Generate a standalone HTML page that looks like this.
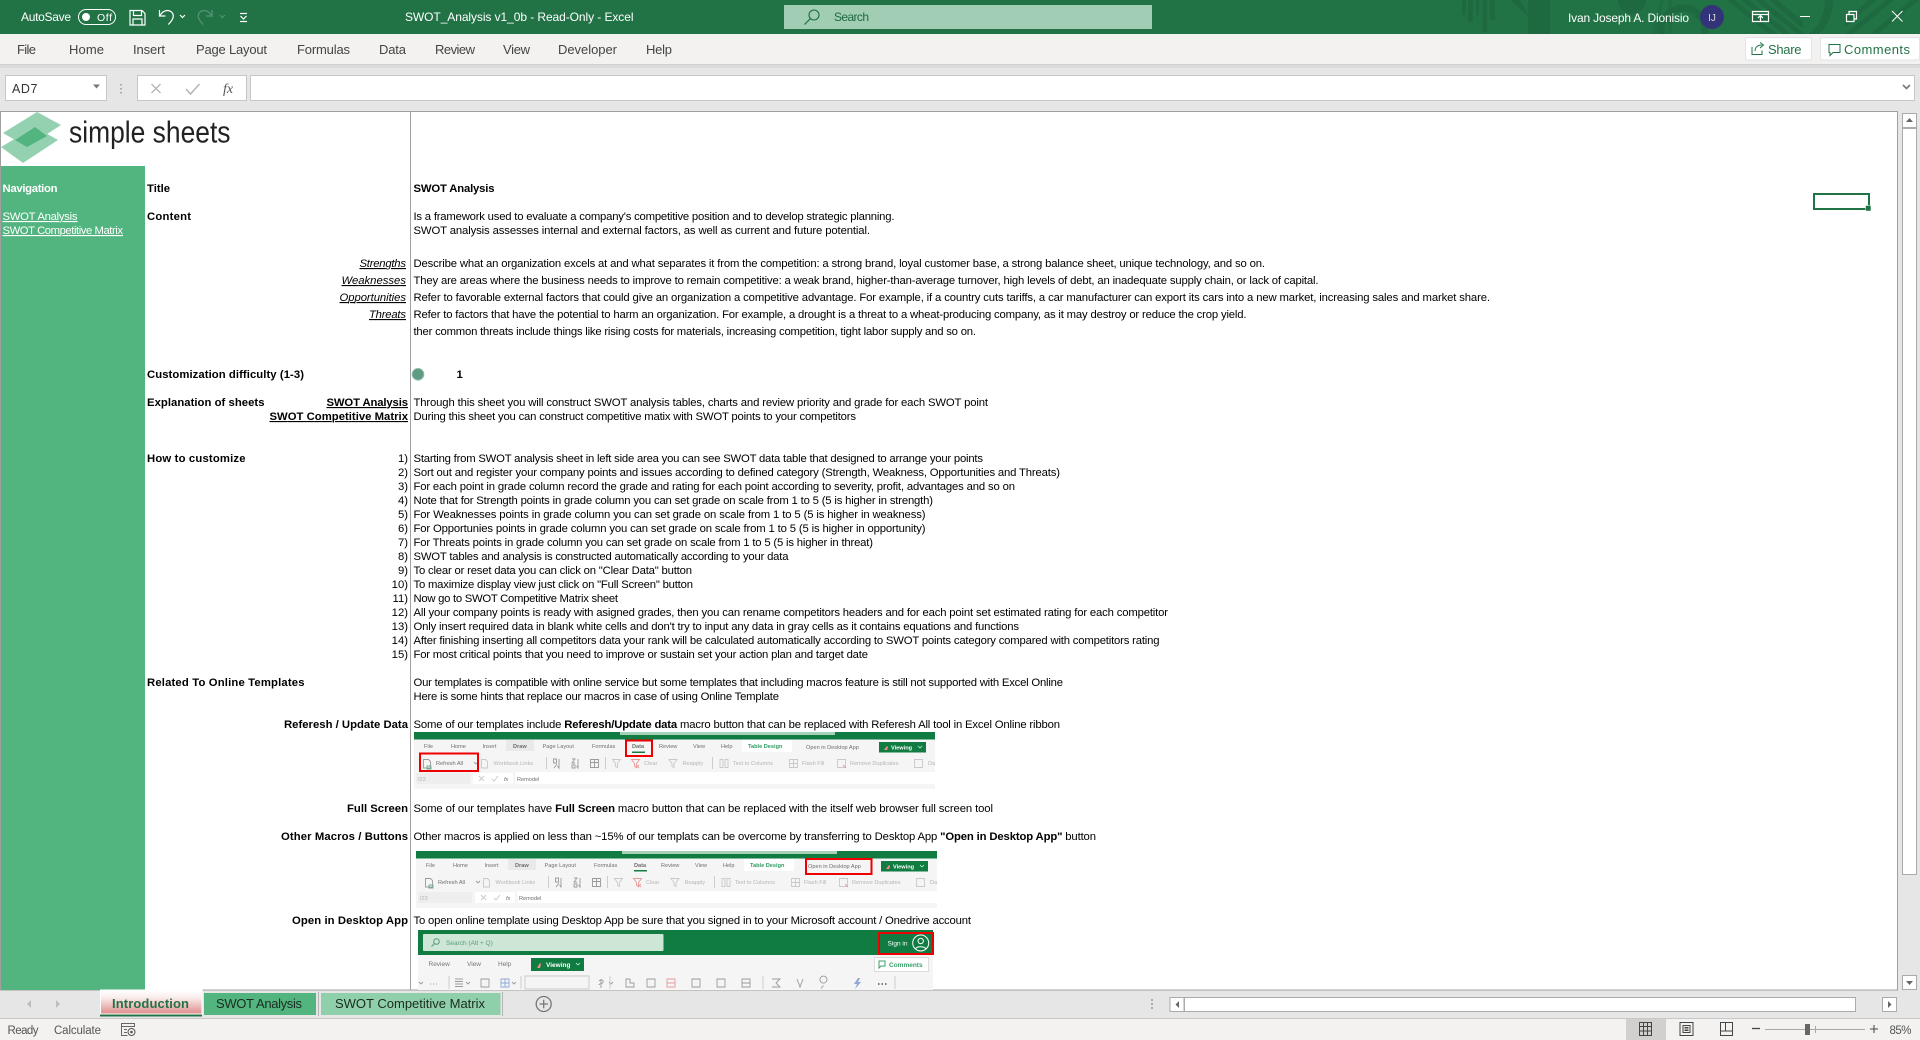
<!DOCTYPE html>
<html><head><meta charset="utf-8"><title>SWOT_Analysis v1_0b - Read-Only - Excel</title>
<style>
html,body{margin:0;padding:0;background:#e6e6e6;overflow:hidden}
svg{display:block;font-family:"Liberation Sans",Arial,sans-serif}
.c{font-size:11.3px;fill:#000}
.b{font-size:11.3px;font-weight:bold;fill:#000}
.i{font-size:11.3px;font-style:italic;fill:#000;text-decoration:underline}
.u{text-decoration:underline}
.r{text-anchor:end}
.tab{font-size:13px;fill:#444}
.w{font-size:12px;fill:#fff}
.s{font-size:11.5px;fill:#555}
.t{font-size:5.6px;fill:#6f6f6f}
.g{font-size:5.6px;fill:#b5b5b5}
.ic{fill:none;stroke:#fff;stroke-width:1.2}
.ti{fill:none;stroke:#9a9a9a;stroke-width:.9}
.tg{fill:none;stroke:#6fb08c;stroke-width:.9}
.tl{fill:none;stroke:#c9c9c9;stroke-width:.9}
.tr{fill:none;stroke:#e79a9a;stroke-width:.9}
.tb{fill:none;stroke:#8ea7d8;stroke-width:.9}
</style></head>
<body>
<svg width="1920" height="1040" viewBox="0 0 1920 1040" xmlns="http://www.w3.org/2000/svg">
<rect width="1920" height="1040" fill="#e6e6e6"/>
<!-- title bar -->
<rect width="1920" height="34" fill="#217346"/>
<g fill="#1e6940">
<rect x="1462" y="0" width="4" height="15"/><rect x="1468" y="0" width="5" height="22"/><rect x="1476" y="0" width="3" height="15"/><rect x="1483" y="0" width="4" height="32"/><rect x="1490" y="0" width="5" height="20"/>
<path d="M1510 0h10l8 14v-14h22v34h-22v-18z"/>
<circle cx="1632" cy="0" r="14"/>
<path d="M1652 34l8-34h4l-8 34zM1668 0h4v34h-4z" opacity=".6"/>
<circle cx="1683" cy="30" r="22" fill="none" stroke="#1e6940" stroke-width="7"/>
<path d="M1727 0h8l42 34h-8zM1741 0h8l42 34h-8zM1755 0h8l42 34h-8zM1769 0h8l26 21v8z"/>
<path d="M1825 0h8c0 14-5 26-14 34h-10c10-8 16-20 16-34z"/>
<path d="M1845 20l24-20h8l-32 27zM1845 34l41-34h8l-41 34zM1870 34l41-34h8l-41 34z"/>
</g>
<text class="w" x="21" y="21" textLength="50">AutoSave</text>
<rect x="78.500" y="9.500" width="37" height="15" rx="7.500" fill="none" stroke="#fff"/>
<circle cx="86" cy="17" r="4" fill="#fff"/>
<text x="97" y="21" font-size="10.500" fill="#fff" textLength="15">Off</text>
<path class="ic" d="M130 10.500h12l3 3v11.500h-15zM133.500 10.500v5h8v-5M133 25v-6h9v6"/>
<path class="ic" d="M159.500 10v6h6M159.800 15.800c2-3.300 4.500-5.300 7.500-5.300 3.500 0 6 2.500 6 5.500 0 3-2 5.500-5 8.500" stroke-width="1.400"/>
<path class="ic" d="M180 15l2.500 2.500 2.500-2.500"/>
<path d="M212 10v6h-6M211.700 15.800c-2-3.300-4.500-5.300-7.500-5.300-3.500 0-6 2.500-6 5.500 0 3 2 5.500 5 8.500" fill="none" stroke="#4f9070" stroke-width="1.400"/>
<path d="M220 15l2.500 2.500 2.500-2.500" fill="none" stroke="#4f9070" stroke-width="1.200"/>
<path class="ic" d="M240 13.500h7M240.500 16l3 3 3-3M240 21.500h7"/>
<text class="w" x="405" y="21" textLength="228.500">SWOT_Analysis v1_0b  -  Read-Only  -  Excel</text>
<rect x="784" y="5" width="368" height="24" fill="#a0cdb4"/>
<circle cx="814" cy="15" r="5" fill="none" stroke="#1e6b42" stroke-width="1.100"/>
<path d="M810.500 18.500l-6 6" stroke="#1e6b42" stroke-width="1.200"/>
<text x="834" y="21" font-size="12" fill="#1e6b42" textLength="35">Search</text>
<text class="w" x="1568" y="22" textLength="121">Ivan Joseph A. Dionisio</text>
<circle cx="1712" cy="17" r="12" fill="#33337a"/>
<text x="1712" y="21" font-size="10" fill="#ddd" text-anchor="middle">IJ</text>
<path class="ic" d="M1752.500 11.500h16v10h-16zM1752.500 14.500h16M1760.500 21v-5M1758 18l2.500-2.500 2.500 2.500" stroke-width="1"/>
<path d="M1800 16.500h10" stroke="#fff" stroke-width="1"/>
<path class="ic" d="M1846.500 14.500h7.500v7h-7.500zM1849 14v-2.500h7.500v7.500h-2.500" stroke-width="1"/>
<path d="M1892 11l10.500 10.500M1902.500 11l-10.500 10.500" stroke="#fff" stroke-width="1"/>
<!-- ribbon tabs -->
<rect y="34" width="1920" height="30" fill="#f3f2f1"/>
<rect y="64" width="1920" height="1" fill="#cfcfcf"/>
<rect y="65" width="1920" height="3" fill="#dcdcdc"/>
<text class="tab" x="17" y="54" textLength="19">File</text>
<text class="tab" x="69" y="54" textLength="35">Home</text>
<text class="tab" x="133" y="54" textLength="32">Insert</text>
<text class="tab" x="196" y="54" textLength="71">Page Layout</text>
<text class="tab" x="297" y="54" textLength="53">Formulas</text>
<text class="tab" x="379" y="54" textLength="27">Data</text>
<text class="tab" x="435" y="54" textLength="40">Review</text>
<text class="tab" x="503" y="54" textLength="27">View</text>
<text class="tab" x="558" y="54" textLength="59">Developer</text>
<text class="tab" x="646" y="54" textLength="26">Help</text>
<rect x="1745.500" y="37.500" width="66" height="22.500" rx="1.500" fill="#fff" stroke="#e3e3e3"/>
<rect x="1820.500" y="37.500" width="99" height="22.500" rx="1.500" fill="#fff" stroke="#e3e3e3"/>
<path d="M1752 47v7.500h10v-4M1755 51c0-4 3-6 7-6M1760 42.500l3.500 2.500-3.500 3" fill="none" stroke="#217346"/>
<text x="1768" y="54" font-size="13" fill="#217346" textLength="33.500">Share</text>
<path d="M1829 44.500h11v8h-7l-3 3v-3h-1z" fill="none" stroke="#217346"/>
<text x="1844" y="54" font-size="13" fill="#217346" textLength="66">Comments</text>
<!-- formula bar -->
<rect x="5.500" y="75.500" width="101" height="25" fill="#fff" stroke="#c6c6c6"/>
<text x="12" y="93" font-size="12.500" fill="#333" textLength="25.500">AD7</text>
<path d="M93 84.500h7l-3.500 4z" fill="#777"/>
<path d="M121 84v1.500M121 88v1.500M121 92v1.500" stroke="#aaa" stroke-width="2"/>
<rect x="137.500" y="75.500" width="109" height="25" fill="#fff" stroke="#c6c6c6"/>
<path d="M151.500 84l9 9M160.500 84l-9 9" stroke="#b5b5b5" stroke-width="1.300"/>
<path d="M186 89l4.500 5 9-10" fill="none" stroke="#b5b5b5" stroke-width="1.500"/>
<text x="223" y="93" font-size="14" font-style="italic" font-family="Liberation Serif" fill="#555">fx</text>
<rect x="250.500" y="75.500" width="1664" height="25" fill="#fff" stroke="#c6c6c6"/>
<path d="M1903 85l3.500 3.500 3.500-3.500" fill="none" stroke="#777" stroke-width="1.600"/>
<!-- sheet -->
<rect x="0.500" y="111.500" width="1897" height="878.500" fill="#fff" stroke="#a0a0a0"/>
<rect x="1" y="166" width="144" height="824" fill="#52b47e"/>
<rect x="410" y="112" width="1" height="878" fill="#a0a0a0"/>
<!-- logo -->
<path d="M3 133L37 112 61 125 27 147z" fill="#94d1b0"/>
<path d="M1 147L35 127 58 140 23 163z" fill="#94d1b0"/>
<path d="M15 140L35 127 47 136 27 147z" fill="#52b47e"/>
<text x="69" y="142.500" font-size="31" fill="#222" textLength="161.500" lengthAdjust="spacingAndGlyphs">simple sheets</text>
<!-- nav -->
<text class="b" x="2.500" y="192" style="fill:#fff" textLength="55">Navigation</text>
<text class="c u" x="2.500" y="220" style="fill:#fff" textLength="75">SWOT Analysis</text>
<text class="c u" x="2.500" y="234" style="fill:#fff" textLength="120.500">SWOT Competitive Matrix</text>
<!-- labels -->
<text class="b" x="147" y="192" textLength="23">Title</text>
<text class="b" x="147" y="220" textLength="44">Content</text>
<text class="i r" x="406" y="267" textLength="46.500">Strengths</text>
<text class="i r" x="406" y="284" textLength="64.500">Weaknesses</text>
<text class="i r" x="406" y="301" textLength="66.500">Opportunities</text>
<text class="i r" x="406" y="318" textLength="37">Threats</text>
<text class="b" x="147" y="378" textLength="157">Customization difficulty (1-3)</text>
<text class="b" x="147" y="406" textLength="117.500">Explanation of sheets</text>
<text class="b r u" x="408" y="406" textLength="81.500">SWOT Analysis</text>
<text class="b r u" x="408" y="420" textLength="138.500">SWOT Competitive Matrix</text>
<text class="b" x="147" y="462" textLength="98.500">How to customize</text>
<text class="b" x="147" y="686" textLength="157.500">Related To Online Templates</text>
<text class="b r" x="408" y="728" textLength="124">Referesh / Update Data</text>
<text class="b r" x="408" y="812" textLength="61">Full Screen</text>
<text class="b r" x="408" y="840" textLength="127">Other Macros / Buttons</text>
<text class="b r" x="408" y="924" textLength="116">Open in Desktop App</text>
<!-- numbers -->
<text class="c r" x="408" y="462">1)</text><text class="c r" x="408" y="476">2)</text><text class="c r" x="408" y="490">3)</text><text class="c r" x="408" y="504">4)</text><text class="c r" x="408" y="518">5)</text><text class="c r" x="408" y="532">6)</text><text class="c r" x="408" y="546">7)</text><text class="c r" x="408" y="560">8)</text><text class="c r" x="408" y="574">9)</text><text class="c r" x="408" y="588">10)</text><text class="c r" x="408" y="602">11)</text><text class="c r" x="408" y="616">12)</text><text class="c r" x="408" y="630">13)</text><text class="c r" x="408" y="644">14)</text><text class="c r" x="408" y="658">15)</text>
<!-- content -->
<text class="b" x="413.500" y="192" textLength="81">SWOT Analysis</text>
<text class="c" x="413.500" y="220" textLength="481">Is a framework used to evaluate a company's competitive position and to develop strategic planning.</text>
<text class="c" x="413.500" y="234" textLength="456.500">SWOT analysis assesses internal and external factors, as well as current and future potential.</text>
<text class="c" x="413.500" y="267" textLength="851.500">Describe what an organization excels at and what separates it from the competition: a strong brand, loyal customer base, a strong balance sheet, unique technology, and so on.</text>
<text class="c" x="413.500" y="284" textLength="905">They are areas where the business needs to improve to remain competitive: a weak brand, higher-than-average turnover, high levels of debt, an inadequate supply chain, or lack of capital.</text>
<text class="c" x="413.500" y="301" textLength="1076.500">Refer to favorable external factors that could give an organization a competitive advantage. For example, if a country cuts tariffs, a car manufacturer can export its cars into a new market, increasing sales and market share.</text>
<text class="c" x="413.500" y="318" textLength="833">Refer to factors that have the potential to harm an organization. For example, a drought is a threat to a wheat-producing company, as it may destroy or reduce the crop yield.</text>
<text class="c" x="413.500" y="335" textLength="562.500">ther common threats include things like rising costs for materials, increasing competition, tight labor supply and so on.</text>
<circle cx="418" cy="374.300" r="5.800" fill="#5d9c82" stroke="#8fb9a7"/>
<text class="b" x="456.500" y="378">1</text>
<text class="c" x="413.500" y="406" textLength="574.500">Through this sheet you will construct SWOT analysis tables, charts and review priority and grade for each SWOT point</text>
<text class="c" x="413.500" y="420" textLength="442.500">During this sheet you can construct competitive matix with SWOT points to your competitors</text>
<text class="c" x="413.500" y="462" textLength="569.500">Starting from SWOT analysis sheet in left side area you can see SWOT data table that designed to arrange your points</text>
<text class="c" x="413.500" y="476" textLength="646.500">Sort out and register your company points and issues according to defined category (Strength, Weakness, Opportunities and Threats)</text>
<text class="c" x="413.500" y="490" textLength="601.500">For each point in grade column record the grade and rating for each point according to severity, profit, advantages and so on</text>
<text class="c" x="413.500" y="504" textLength="519.500">Note that for Strength points in grade column you can set grade on scale from 1 to 5 (5 is higher in strength)</text>
<text class="c" x="413.500" y="518" textLength="512">For Weaknesses points in grade column you can set grade on scale from 1 to 5 (5 is higher in weakness)</text>
<text class="c" x="413.500" y="532" textLength="512">For Opportunies points in grade column you can set grade on scale from 1 to 5 (5 is higher in opportunity)</text>
<text class="c" x="413.500" y="546" textLength="459.500">For Threats points in grade column you can set grade on scale from 1 to 5 (5 is higher in threat)</text>
<text class="c" x="413.500" y="560" textLength="375">SWOT tables and analysis is constructed automatically according to your data</text>
<text class="c" x="413.500" y="574" textLength="278.500">To clear or reset data you can click on "Clear Data" button</text>
<text class="c" x="413.500" y="588" textLength="279.500">To maximize display view just click on "Full Screen" button</text>
<text class="c" x="413.500" y="602" textLength="204.500">Now go to SWOT Competitive Matrix sheet</text>
<text class="c" x="413.500" y="616" textLength="754.500">All your company points is ready with asigned grades, then you can rename competitors headers and for each point set estimated rating for each competitor</text>
<text class="c" x="413.500" y="630" textLength="605.500">Only insert required data in blank white cells and don't try to input any data in gray cells as it contains equations and functions</text>
<text class="c" x="413.500" y="644" textLength="746">After finishing inserting all competitors data your rank will be calculated automatically according to SWOT points category compared with competitors rating</text>
<text class="c" x="413.500" y="658" textLength="454.500">For most critical points that you need to improve or sustain set your action plan and target date</text>
<text class="c" x="413.500" y="686" textLength="649.500">Our templates is compatible with online service but some templates that including macros feature is still not supported with Excel Online</text>
<text class="c" x="413.500" y="700" textLength="365.500">Here is some hints that replace our macros in case of using Online Template</text>
<text class="c" x="413.500" y="728" textLength="646.500">Some of our templates include <tspan font-weight="bold">Referesh/Update data</tspan> macro button that can be replaced with Referesh All tool in Excel Online ribbon</text>
<text class="c" x="413.500" y="812" textLength="579.500">Some of our templates have <tspan font-weight="bold">Full Screen</tspan> macro button that can be replaced with the itself web browser full screen tool</text>
<text class="c" x="413.500" y="840" textLength="682.500">Other macros is applied on less than ~15% of our templats can be overcome by transferring to Desktop App <tspan font-weight="bold">"Open in Desktop App"</tspan> button</text>
<text class="c" x="413.500" y="924" textLength="557.500">To open online template using Desktop App be sure that you signed in to your Microsoft account / Onedrive account</text>
<!-- thumb 1 -->
<rect x="414" y="732" width="521" height="57" fill="#f5f5f5"/>
<rect x="414" y="732" width="521" height="7.500" fill="#107c41"/>
<rect x="620" y="732" width="215" height="3" fill="#a7d0b9"/>
<rect x="506" y="740" width="28" height="11" fill="#e9e9e9"/>
<rect x="742" y="740" width="50" height="12" fill="#fff"/>
<text class="t" x="424" y="748">File</text><text class="t" x="451" y="748">Home</text><text class="t" x="482.500" y="748">Insert</text><text class="t" x="513" y="748" font-weight="bold">Draw</text><text class="t" x="542.500" y="748">Page Layout</text><text class="t" x="592" y="748">Formulas</text><text class="t" x="632" y="748" font-weight="bold">Data</text><text class="t" x="659" y="748">Review</text><text class="t" x="693" y="748">View</text><text class="t" x="721" y="748">Help</text><text class="t" x="748" y="748" style="fill:#2f9a62" font-weight="bold">Table Design</text><text class="t" x="806" y="749">Open in Desktop App</text>
<rect x="632" y="751.500" width="13" height="1.500" fill="#107c41"/>
<rect x="879" y="742" width="47" height="10.500" fill="#107c41"/>
<path d="M884 750l3-4 1 1-1 3z" fill="#f88"/>
<text x="891" y="749.500" font-size="5.600" font-weight="bold" fill="#fff">Viewing</text>
<path d="M918 746l2 2 2-2" fill="none" stroke="#cfe" stroke-width=".7"/>
<g transform="translate(0,0)">
<path class="ti" d="M423.500 759.500h5l2 2v6.500h-7zM474 762l2 2 2-2"/>
<path class="tg" d="M427 766h4v3h-4z"/>
<path class="tl" d="M481.500 759.500h4l2 2v6.500h-6z"/>
<path class="ti" d="M553.500 759h3v4h-3zM554 768l3-4M559 759v9l-1.500-2M572 759h3l-3 4h3M572 765h3v3h-3zM578 759v9l-1.500-2M590.500 759.500h8v8h-8zM590.500 762.500h8M594.500 759.500v8"/>
<path class="tl" d="M546.500 757v12M605.500 757v12M612.500 759.500h8l-3 4v4l-2-1v-3zM669 759.500h8l-3 4v4l-2-1v-3zM712.500 757v12M720 759.500h3v8h-3zM725 759.500h3v8h-3zM789.500 759.500h8v8h-8zM789.500 763.500h8M793.500 759.500v8M837.500 759.500h8v8h-8zM914.500 759.500h8v8h-8z"/>
<path class="tr" d="M631.500 759.500h8l-3 4v4l-2-1v-3zM636 765l3 3M639 765l-3 3M843 765l3 3"/>
</g>
<text class="t" x="436" y="765">Refresh All</text>
<text class="g" x="493.500" y="765">Workbook Links</text>
<text class="g" x="644" y="765">Clear</text><text class="g" x="682.500" y="765">Reapply</text><text class="g" x="733" y="765">Text to Columns</text><text class="g" x="802" y="765">Flash Fill</text><text class="g" x="850" y="765">Remove Duplicates</text><text class="g" x="928" y="765">Da</text>
<rect x="515.500" y="772" width="420" height="12" fill="#fff"/>
<rect x="416" y="773" width="54" height="11" fill="#eee"/>
<text class="g" x="418" y="781">I23</text>
<rect x="473" y="773" width="40" height="11" fill="#fff"/>
<path d="M479 776l5 5M484 776l-5 5M492 779l2 2 4-5" stroke="#ccc" fill="none"/>
<text class="t" x="504" y="781" font-style="italic">fx</text>
<text class="t" x="517" y="781">Remodel</text>
<rect x="626" y="740.500" width="26" height="15.500" fill="none" stroke="#ee0000" stroke-width="2"/>
<rect x="420" y="753.500" width="58" height="17.500" fill="none" stroke="#ee0000" stroke-width="2"/>
<!-- thumb 2 -->
<rect x="416" y="851" width="521" height="57" fill="#f5f5f5"/>
<rect x="416" y="851" width="521" height="7.500" fill="#107c41"/>
<rect x="622" y="851" width="215" height="3" fill="#a7d0b9"/>
<rect x="508" y="859" width="28" height="11" fill="#e9e9e9"/>
<rect x="744" y="859" width="50" height="12" fill="#fff"/>
<text class="t" x="426" y="867">File</text><text class="t" x="453" y="867">Home</text><text class="t" x="484.500" y="867">Insert</text><text class="t" x="515" y="867" font-weight="bold">Draw</text><text class="t" x="544.500" y="867">Page Layout</text><text class="t" x="594" y="867">Formulas</text><text class="t" x="634" y="867" font-weight="bold">Data</text><text class="t" x="661" y="867">Review</text><text class="t" x="695" y="867">View</text><text class="t" x="723" y="867">Help</text><text class="t" x="750" y="867" style="fill:#2f9a62" font-weight="bold">Table Design</text><text class="t" x="808" y="868">Open in Desktop App</text>
<rect x="634" y="870" width="13" height="1.500" fill="#107c41"/>
<rect x="881" y="861" width="47" height="10.500" fill="#107c41"/>
<path d="M886 869l3-4 1 1-1 3z" fill="#f88"/>
<text x="893" y="868.500" font-size="5.600" font-weight="bold" fill="#fff">Viewing</text>
<path d="M920 865l2 2 2-2" fill="none" stroke="#cfe" stroke-width=".7"/>
<g transform="translate(2,119)">
<path class="ti" d="M423.500 759.500h5l2 2v6.500h-7zM474 762l2 2 2-2"/>
<path class="tg" d="M427 766h4v3h-4z"/>
<path class="tl" d="M481.500 759.500h4l2 2v6.500h-6z"/>
<path class="ti" d="M553.500 759h3v4h-3zM554 768l3-4M559 759v9l-1.500-2M572 759h3l-3 4h3M572 765h3v3h-3zM578 759v9l-1.500-2M590.500 759.500h8v8h-8zM590.500 762.500h8M594.500 759.500v8"/>
<path class="tl" d="M546.500 757v12M605.500 757v12M612.500 759.500h8l-3 4v4l-2-1v-3zM669 759.500h8l-3 4v4l-2-1v-3zM712.500 757v12M720 759.500h3v8h-3zM725 759.500h3v8h-3zM789.500 759.500h8v8h-8zM789.500 763.500h8M793.500 759.500v8M837.500 759.500h8v8h-8zM914.500 759.500h8v8h-8z"/>
<path class="tr" d="M631.500 759.500h8l-3 4v4l-2-1v-3zM636 765l3 3M639 765l-3 3M843 765l3 3"/>
</g>
<text class="t" x="438" y="884">Refresh All</text>
<text class="g" x="495.500" y="884">Workbook Links</text>
<text class="g" x="646" y="884">Clear</text><text class="g" x="684.500" y="884">Reapply</text><text class="g" x="735" y="884">Text to Columns</text><text class="g" x="804" y="884">Flash Fill</text><text class="g" x="852" y="884">Remove Duplicates</text><text class="g" x="930" y="884">Da</text>
<rect x="517.500" y="891" width="420" height="12" fill="#fff"/>
<rect x="418" y="892" width="54" height="11" fill="#eee"/>
<text class="g" x="420" y="900">I23</text>
<rect x="475" y="892" width="40" height="11" fill="#fff"/>
<path d="M481 895l5 5M486 895l-5 5M494 898l2 2 4-5" stroke="#ccc" fill="none"/>
<text class="t" x="506" y="900" font-style="italic">fx</text>
<text class="t" x="519" y="900">Remodel</text>
<rect x="806" y="859" width="65.500" height="15" fill="none" stroke="#ee0000" stroke-width="2"/>
<!-- thumb 3 -->
<rect x="418" y="930" width="515" height="60" fill="#f5f5f5"/>
<rect x="418" y="930" width="515" height="25" fill="#107c41"/>
<rect x="423" y="934" width="240.500" height="17" rx="1" fill="#cde6d6"/>
<circle cx="436.500" cy="941.500" r="2.800" fill="none" stroke="#5d9c7a"/>
<path d="M434.500 943.500l-3 3" stroke="#5d9c7a"/>
<text x="446" y="945" font-size="6.500" fill="#5d9c7a">Search (Alt + Q)</text>
<text x="887.500" y="945.500" font-size="6.500" fill="#fff" textLength="20">Sign in</text>
<circle cx="920.700" cy="943" r="8" fill="none" stroke="#fff"/>
<circle cx="920.700" cy="941" r="2.700" fill="none" stroke="#fff"/>
<path d="M915.500 949c1-3 9-3 10.500 0" fill="none" stroke="#fff"/>
<rect x="879" y="933" width="54" height="21" fill="none" stroke="#ee0000" stroke-width="2"/>
<text x="428.500" y="966" font-size="6.500" fill="#777">Review</text><text x="467" y="966" font-size="6.500" fill="#777">View</text><text x="498" y="966" font-size="6.500" fill="#777">Help</text>
<rect x="531" y="958" width="53" height="13" fill="#107c41"/>
<path d="M537 968l3-5 1 1-1 4z" fill="#f88"/>
<text x="546" y="967" font-size="6.500" font-weight="bold" fill="#fff">Viewing</text>
<path d="M576 963l2 2 2-2" fill="none" stroke="#cfe" stroke-width=".7"/>
<rect x="874.500" y="957.500" width="54" height="14" fill="#fff" stroke="#ddd"/>
<path d="M879 961h6v5h-4l-2 2z" fill="none" stroke="#3aa06a"/>
<text x="889" y="967" font-size="6.500" font-weight="bold" fill="#3aa06a">Comments</text>
<path class="ti" d="M419 982l2 2 2-2M430 984h1M433 984h1M436 984h1M455 979h8M455 981.500h8M455 984h8M455 986.500h8M466 982l2 2 2-2M481 979h8v8h-8zM512 982l2 2 2-2M601 979v9M599 981c2-2 5-1 4 1-1 3-4 1-4 3M609 982l2 2 2-2M626 979h4v4h4v4h-8zM647 979h8v8h-8zM692 979h8v8h-8zM717 979h8v8h-8zM742 979h8v8h-8zM742 983h8M772 979h8l-4 4 4 4h-8M797 979l3 8 3-8M826 982a3.500 3.500 0 1 0-.1 .1M823.500 985.500l-2.500 3"/>
<path class="tl" d="M449 976v13M521 976v13M525 976h64v13h-64zM763 976v13M610 976v13M895 976v13"/>
<path class="tb" d="M501 979h8v8h-8zM501 983h8M505 979v8"/>
<path class="tr" d="M667 979h8v8h-8zM667 983h8"/>
<path d="M858 978l-4 6h3l-2 5 6-7h-3l2-4z" fill="#8ea7d8"/>
<path d="M878 984h1.500M881.500 984h1.500M885 984h1.500" stroke="#555" stroke-width="1.500"/>
<!-- selected cell -->
<rect x="1814" y="194" width="55" height="15" fill="none" stroke="#217346" stroke-width="2"/>
<rect x="1865.500" y="205.500" width="5.500" height="5.500" fill="#217346" stroke="#fff" stroke-width=".5"/>
<!-- v scrollbar -->
<rect x="1902.500" y="113.500" width="14" height="14" fill="#fff" stroke="#ababab"/>
<path d="M1906 122h7l-3.500-4z" fill="#666"/>
<rect x="1902.500" y="128.500" width="14" height="746" fill="#fff" stroke="#ababab"/>
<rect x="1902.500" y="975.500" width="14" height="14" fill="#fff" stroke="#ababab"/>
<path d="M1906 981h7l-3.500 4z" fill="#666"/>
<!-- sheet tabs -->
<defs><linearGradient id="gr" x1="0" y1="0" x2="0" y2="1"><stop offset="0" stop-color="#fff"/><stop offset=".3" stop-color="#fbeeee"/><stop offset="1" stop-color="#df8c8c"/></linearGradient></defs>
<path d="M31 1000l-4 4 4 4zM56 1000l4 4-4 4z" fill="#bdbdbd"/>
<rect x="100.500" y="990" width="101.500" height="24" fill="url(#gr)" stroke="#fff"/>
<rect x="100" y="1014.500" width="102" height="2" fill="#217346"/>
<text x="112" y="1008" font-size="13" font-weight="bold" fill="#217346" textLength="77">Introduction</text>
<rect x="204" y="993" width="112" height="22" fill="#52b47e"/>
<text x="216" y="1008" font-size="13" fill="#1c2a22" textLength="86">SWOT Analysis</text>
<rect x="318" y="992" width="1" height="24" fill="#b5b5b5"/>
<rect x="321" y="993" width="179.500" height="22" fill="#8fd0aa"/>
<text x="335" y="1008" font-size="13" fill="#1c2a22" textLength="150">SWOT Competitive Matrix</text>
<rect x="502" y="992" width="1" height="24" fill="#b5b5b5"/>
<circle cx="543.700" cy="1004" r="7.500" fill="none" stroke="#777" stroke-width="1.300"/>
<path d="M539.500 1004h8.500M543.700 999.700v8.500" stroke="#777" stroke-width="1.300"/>
<path d="M1152 999v2M1152 1003v2M1152 1007v2" stroke="#aaa" stroke-width="2"/>
<!-- h scrollbar -->
<rect x="1170" y="997.500" width="14" height="14" fill="#fff" stroke="#ababab"/>
<path d="M1179 1001v7l-3.500-3.500z" fill="#666"/>
<rect x="1184.500" y="997.500" width="671" height="14" fill="#fff" stroke="#ababab"/>
<rect x="1882.500" y="997.500" width="14" height="14" fill="#fff" stroke="#ababab"/>
<path d="M1888 1001v7l3.500-3.500z" fill="#666"/>
<!-- status bar -->
<rect y="1018" width="1920" height="22" fill="#f3f2f1"/>
<rect y="1018" width="1920" height="1" fill="#c8c8c8"/>
<text class="s" x="7.500" y="1034" textLength="31">Ready</text>
<text class="s" x="54" y="1034" textLength="47">Calculate</text>
<path d="M121.500 1023.500h13v3h-13zM121.500 1026.500v9h6M124 1029.500h3M124 1032.500h3" fill="none" stroke="#666"/>
<circle cx="131.500" cy="1032" r="3.500" fill="none" stroke="#555"/>
<circle cx="131.500" cy="1032" r="1.300" fill="#555"/>
<rect x="1626" y="1019" width="40" height="21" fill="#d2d0ce"/>
<path d="M1639.500 1022.500h12v13h-12zM1643.500 1022.500v13M1647.500 1022.500v13M1639.500 1026.500h12M1639.500 1031h12" fill="none" stroke="#444"/>
<path d="M1680 1022.500h13v13h-13zM1683 1025.500h7v7h-7zM1684.500 1027.500h4M1684.500 1029h4M1684.500 1030.500h4" fill="none" stroke="#444"/>
<path d="M1720.500 1022.500h12v13h-12zM1720.500 1031h12M1725.500 1022.500v8.500" fill="none" stroke="#444"/>
<path d="M1752 1028.500h8" stroke="#444" stroke-width="1.300"/>
<rect x="1765" y="1029" width="100" height="1" fill="#a8a8a8"/>
<rect x="1815" y="1026" width="1" height="7" fill="#a8a8a8"/>
<rect x="1805" y="1024" width="5" height="11" fill="#666"/>
<path d="M1870 1029h8M1874 1025v8" stroke="#444"/>
<text x="1889.500" y="1034" font-size="11.500" fill="#555" textLength="22">85%</text>
</svg>
</body></html>
